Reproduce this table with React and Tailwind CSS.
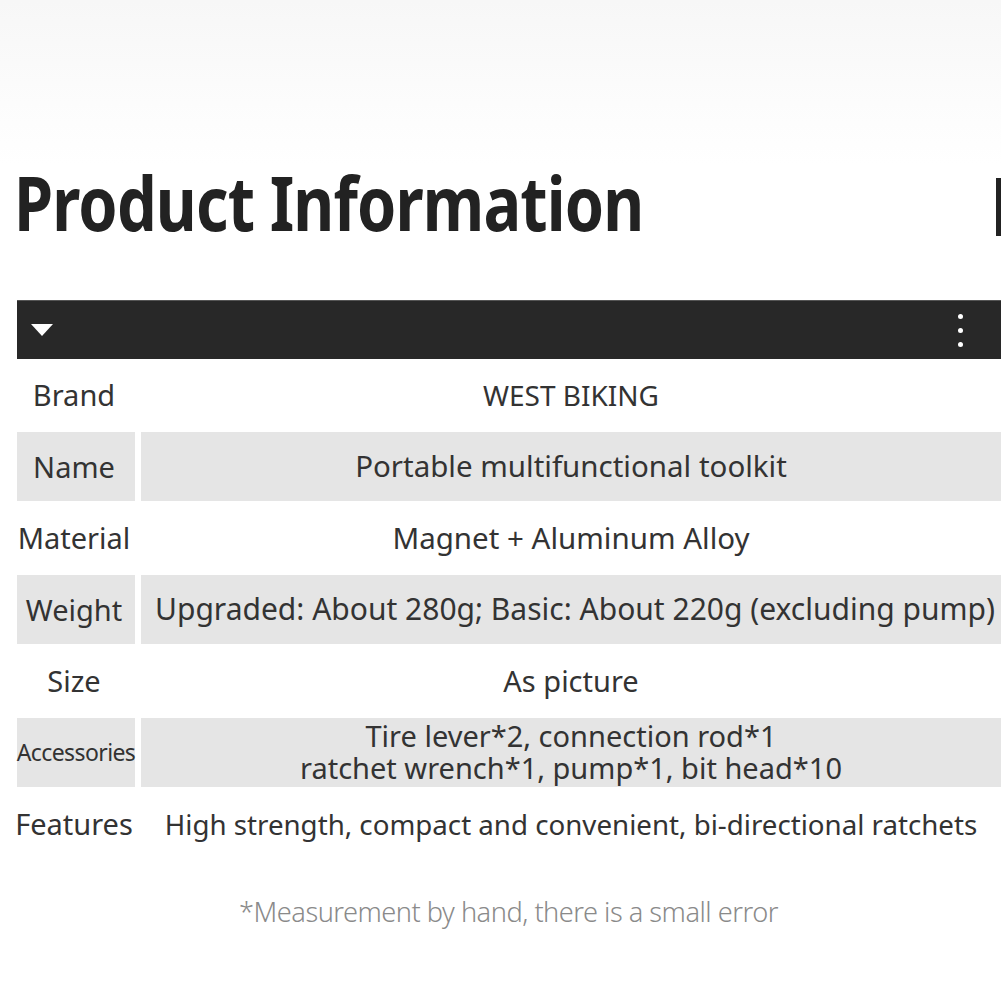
import React from "react";

const rows = [
  { label: "Brand", value: ["WEST BIKING"], gray: false, size: "text-[28px]" },
  { label: "Name", value: ["Portable multifunctional toolkit"], gray: true, size: "text-[29.5px]" },
  { label: "Material", value: ["Magnet + Aluminum Alloy"], gray: false, size: "text-[29.5px]" },
  { label: "Weight", value: ["Upgraded: About 280g; Basic: About 220g (excluding pump)"], gray: true, size: "text-[30px] pl-[8px]" },
  { label: "Size", value: ["As picture"], gray: false, size: "text-[29px]" },
  { label: "Accessories", value: ["Tire lever*2, connection rod*1", "ratchet wrench*1, pump*1, bit head*10"], gray: true, small: true, size: "text-[29px]" },
  { label: "Features", value: ["High strength, compact and convenient, bi-directional ratchets"], gray: false, size: "text-[27.7px]" },
];

export default function App() {
  return (
    <div
      className="relative w-[1001px] h-[1001px] overflow-hidden bg-white text-[#333]"
      style={{ fontFamily: '"Noto Sans", "Open Sans", sans-serif' }}
    >
      <div className="h-[165px] bg-gradient-to-b from-[#f7f7f7] via-[#fbfbfb] to-white" />
      <div className="flex items-start justify-between pl-[14px]">
        <h1 className="origin-left scale-x-[0.84] whitespace-nowrap text-[75px] font-bold leading-none tracking-[-1px] text-[#222]">
          Product Information
        </h1>
        <div className="mt-[13px] h-[58px] w-[5px] bg-[#222]" />
      </div>
      <div className="mt-[60px] ml-[17px] flex h-[59px] items-center justify-between border-t border-[#555] bg-[#282828] pl-[13px] pr-[38px]">
        <svg width="24" height="14" viewBox="0 0 24 14">
          <polygon points="1,1 23,1 12,13" fill="#fff" />
        </svg>
        <div className="flex flex-col gap-[9px]">
          <div className="h-[5px] w-[5px] rounded-full bg-white" />
          <div className="h-[5px] w-[5px] rounded-full bg-white" />
          <div className="h-[5px] w-[5px] rounded-full bg-white" />
        </div>
      </div>
      <div className="ml-[17px] flex flex-col">
        {rows.map((r) => (
          <div key={r.label} className="flex h-[71.5px] gap-[6px] py-[1px]">
            <div
              className={`flex w-[118px] shrink-0 items-center justify-center whitespace-nowrap ${
                r.gray ? "bg-[#e5e5e5]" : ""
              } ${r.small ? "text-[23px] tracking-[-0.6px]" : "text-[29px] pr-[4px]"}`}
            >
              {r.label}
            </div>
            <div
              className={`flex flex-1 flex-col items-center justify-center whitespace-nowrap leading-[32.5px] ${r.size} ${
                r.gray ? "bg-[#e5e5e5]" : ""
              }`}
            >
              {r.value.map((v) => (
                <div key={v}>{v}</div>
              ))}
            </div>
          </div>
        ))}
      </div>
      <div className="mt-[32px] pl-[16px] text-center text-[27.2px] font-light tracking-[-0.5px] text-[#8a8a8a]">
        *Measurement by hand, there is a small error
      </div>
    </div>
  );
}
